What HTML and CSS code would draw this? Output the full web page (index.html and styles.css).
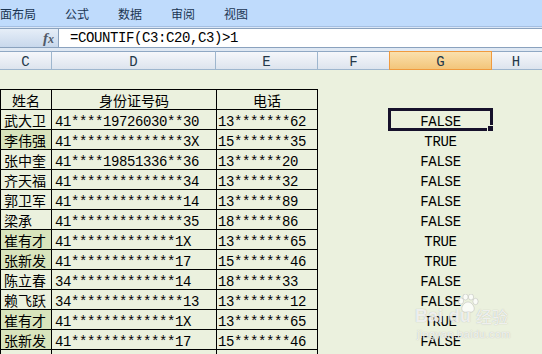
FILE: index.html
```html
<!DOCTYPE html>
<html lang="zh-CN">
<head>
<meta charset="utf-8">
<title>COUNTIF</title>
<link rel="stylesheet" href="styles.css">
</head>
<body>
<div class="ribbon">
  <span>面布局</span><span>公式</span><span>数据</span><span>审阅</span><span>视图</span>
</div>
<div class="ribbon-sep"></div>
<div class="fbar">
  <div class="fx"><span class="f">f</span><span class="x">x</span></div>
  <div class="formula">=COUNTIF(C3:C20,C3)&gt;1</div>
</div>
<div class="fgap"></div>
<div class="colhdr">
  <div class="ch c">C</div>
  <div class="ch d">D</div>
  <div class="ch e">E</div>
  <div class="ch f">F</div>
  <div class="ch g">G</div>
  <div class="ch h">H</div>
</div>
<div class="sheet">
  <div class="tbl">
    <div class="cell hd cjk">姓名</div><div class="cell hd cjk">身份证号码</div><div class="cell hd cjk">电话</div>
    <div class="cell nm cjk">武大卫</div><div class="cell id">41****19726030**30</div><div class="cell ph">13*******62</div>
    <div class="cell nm cjk hl">李伟强</div><div class="cell id">41**************3X</div><div class="cell ph">15*******35</div>
    <div class="cell nm cjk">张中奎</div><div class="cell id">41****19851336**36</div><div class="cell ph">13******20</div>
    <div class="cell nm cjk">齐天福</div><div class="cell id">41**************34</div><div class="cell ph">13******32</div>
    <div class="cell nm cjk">郭卫军</div><div class="cell id">41**************14</div><div class="cell ph">13******89</div>
    <div class="cell nm cjk">梁承</div><div class="cell id">41**************35</div><div class="cell ph">18******86</div>
    <div class="cell nm cjk hl">崔有才</div><div class="cell id">41*************1X</div><div class="cell ph">13*******65</div>
    <div class="cell nm cjk hl">张新发</div><div class="cell id">41*************17</div><div class="cell ph">15*******46</div>
    <div class="cell nm cjk">陈立春</div><div class="cell id">34*************14</div><div class="cell ph">18******33</div>
    <div class="cell nm cjk">赖飞跃</div><div class="cell id">34**************13</div><div class="cell ph">13*******12</div>
    <div class="cell nm cjk hl">崔有才</div><div class="cell id">41*************1X</div><div class="cell ph">13*******65</div>
    <div class="cell nm cjk hl">张新发</div><div class="cell id">41*************17</div><div class="cell ph">15*******46</div>
    <div class="cell nm cjk"></div><div class="cell id"></div><div class="cell ph"></div>
  </div>
  <div class="colF"></div>
  <div class="colG">
    <div class="sel"><span class="handle"></span></div>
    <div class="v">FALSE</div>
    <div class="v">TRUE</div>
    <div class="v">FALSE</div>
    <div class="v">FALSE</div>
    <div class="v">FALSE</div>
    <div class="v">FALSE</div>
    <div class="v">TRUE</div>
    <div class="v">TRUE</div>
    <div class="v">FALSE</div>
    <div class="v">FALSE</div>
    <div class="v">TRUE</div>
    <div class="v">FALSE</div>
  </div>
  <div class="wm">
    <div class="wm-logo">
      <span class="wm-bai">Bai</span>
      <svg class="wm-paw" width="22" height="20" viewBox="0 0 22 20">
        <ellipse cx="4" cy="7" rx="2.6" ry="3.2"/>
        <ellipse cx="8.5" cy="3" rx="2.6" ry="3"/>
        <ellipse cx="14" cy="3" rx="2.6" ry="3"/>
        <ellipse cx="18.5" cy="7.5" rx="2.6" ry="3.2"/>
        <path d="M11 8 C7 8 4 13 5 16 C6 19 9 18 11 18 C13 18 16 19 17 16 C18 13 15 8 11 8 Z"/>
      </svg>
      <span class="wm-du">du</span>
      <span class="wm-jy">经验</span>
    </div>
    <div class="wm-url">jingyan.baidu.com</div>
  </div>
</div>
</body>
</html>
```
FILE: styles.css
```css
html, body {
  margin: 0;
  padding: 0;
}
body {
  width: 542px;
  height: 354px;
  overflow: hidden;
  background: #ebf1de;
  font-family: "Liberation Mono", monospace;
  color: #000;
}
.ribbon {
  height: 26px;
  background: #bfdbfc;
  display: flex;
  gap: 29px;
  align-items: center;
  font-family: "Noto Sans CJK SC", sans-serif;
  font-size: 12px;
  line-height: 26px;
  color: #1b3552;
  border-bottom: 1px solid #a4bfe2;
  box-sizing: border-box;
  height: 27px;
  padding-top: 1px;
}
.ribbon-sep {
  height: 1px;
  background: #dbe7f6;
}
.fbar {
  height: 20px;
  box-sizing: border-box;
  border-top: 1px solid #8aa2be;
  border-bottom: 1px solid #8aa2be;
  display: flex;
  background: #fff;
}
.fx {
  width: 59px;
  box-sizing: border-box;
  border-right: 1px solid #8aa2be;
  background: linear-gradient(#e6eef8, #c8d8ec);
  text-align: right;
  padding-right: 4px;
  font-family: "Liberation Serif", serif;
  font-style: italic;
  font-weight: bold;
  color: #505a68;
  line-height: 18px;
}
.fx .f {
  font-size: 15px;
}
.fx .x {
  font-size: 12px;
}
.formula {
  padding-left: 11px;
  font-size: 14px;
  line-height: 18px;
  letter-spacing: -0.4px;
  white-space: nowrap;
}
.fgap {
  height: 3px;
  background: #dfe8f3;
}
.colhdr {
  display: flex;
  height: 19px;
}
.ch {
  box-sizing: border-box;
  height: 19px;
  border-top: 1px solid #8fa8c4;
  border-bottom: 1px solid #9eb6ce;
  border-right: 1px solid #9eb6ce;
  background: linear-gradient(#f5f7fb, #dde4ee);
  text-align: center;
  font-size: 14px;
  line-height: 21px;
  color: #24384a;
  overflow: hidden;
}
.ch.c { width: 52px; }
.ch.d { width: 164px; }
.ch.e { width: 102px; }
.ch.f { width: 71px; border-right: none; }
.ch.g {
  width: 103px;
  border: 1px solid #f09a3e;
  background: linear-gradient(#fae0ad, #f3c57a);
}
.ch.h { flex: 1; border-right: none; padding-right: 2px; }

.sheet {
  display: flex;
  align-items: flex-start;
  position: relative;
  height: 284px;
}
.tbl {
  margin-top: 19px;
  display: grid;
  grid-template-columns: 50px 164px 100px;
  grid-auto-rows: 19px;
  gap: 1px;
  padding: 1px;
  background: #000;
  width: 318px;
  box-sizing: border-box;
}
.cell {
  background: #ebf1de;
  font-size: 14px;
  line-height: 25px;
  letter-spacing: -0.4px;
  white-space: nowrap;
  overflow: hidden;
}
.cell.cjk {
  font-family: "Noto Sans CJK SC", sans-serif;
  font-size: 14px;
  line-height: 21px;
  letter-spacing: 0;
}
.cell.hd {
  text-align: center;
}
.cell.nm { padding-left: 3px; }
.cell.id { padding-left: 3px; }
.cell.ph { padding-left: 1px; }
.cell.hl { background: #d8e4bc; }

.colF {
  width: 71px;
  flex: none;
}
.colG {
  width: 103px;
  flex: none;
  position: relative;
  padding-top: 40px;
}
.v {
  height: 20px;
  text-align: center;
  font-size: 14px;
  line-height: 24px;
  letter-spacing: -0.3px;
  overflow: hidden;
}
.sel {
  position: absolute;
  left: -1px;
  top: 38px;
  width: 105px;
  height: 23px;
  box-sizing: border-box;
  border: 3px solid #16112b;
}
.handle {
  position: absolute;
  right: -4px;
  bottom: -4px;
  width: 5px;
  height: 5px;
  background: #16112b;
  border: 1px solid #ebf1de;
}
.wm {
  position: absolute;
  left: 413px;
  top: 223px;
  width: 110px;
  color: rgba(255, 255, 255, 0.8);
  font-family: "Liberation Sans", sans-serif;
  text-shadow: 0 0 1px rgba(150, 150, 150, 0.7);
}
.wm-logo {
  position: relative;
  height: 34px;
  font-weight: bold;
  font-size: 18px;
}
.wm-bai {
  position: absolute;
  left: 2px;
  top: 13px;
}
.wm-paw {
  position: absolute;
  left: 44px;
  top: 1px;
  fill: rgba(255, 255, 255, 0.75);
  stroke: rgba(160, 160, 160, 0.6);
  stroke-width: 0.6;
}
.wm-du {
  position: absolute;
  left: 36px;
  top: 13px;
}
.wm-jy {
  position: absolute;
  left: 63px;
  top: 11px;
  font-family: "Noto Sans CJK SC", sans-serif;
  font-size: 16px;
  font-weight: normal;
}
.wm-url {
  margin-top: 1px;
  padding-left: 4px;
  font-size: 11px;
  letter-spacing: 0.3px;
}
```
